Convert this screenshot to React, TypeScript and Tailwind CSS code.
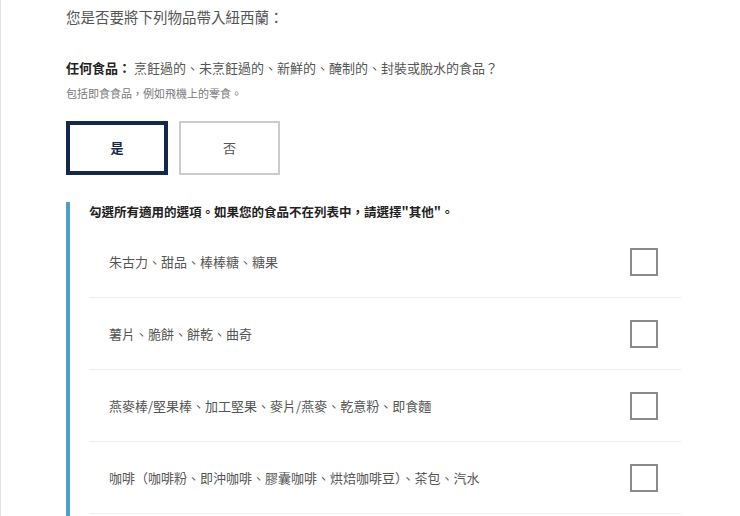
const font = {
  fontFamily:
    '"Noto Sans CJK HK", "Noto Sans CJK TC", "Noto Sans", "Liberation Sans", sans-serif',
};

const items = [
  "朱古力、甜品、棒棒糖、糖果",
  "薯片、脆餅、餅乾、曲奇",
  "燕麥棒/堅果棒、加工堅果、麥片/燕麥、乾意粉、即食麵",
  "咖啡（咖啡粉、即沖咖啡、膠囊咖啡、烘焙咖啡豆）、茶包、汽水",
];

function OptionRow({ label }: { label: string }) {
  return (
    <div className="flex h-[72px] items-center justify-between border-b border-[#eeeeee] pl-5 pr-[23px]">
      <span className="text-[13px] text-[#555555]">{label}</span>
      <span className="block h-[28px] w-[28px] border-2 border-[#8a8a8a] bg-white" />
    </div>
  );
}

export default function App() {
  return (
    <div
      lang="zh-Hant-TW"
      className="h-[516px] w-[740px] overflow-hidden border-l border-[#e2e2e2] bg-white pl-[65px] pt-[7px]"
      style={font}
    >
      <h1 className="text-[14.5px] leading-[20px] text-[#555555]">
        您是否要將下列物品帶入紐西蘭：
      </h1>

      <p className="mt-[31px] text-[13px] leading-[20px] text-[#555555]">
        <span className="font-bold text-[#222222]">任何食品：</span> 烹飪過的、未烹飪過的、新鮮的、醃制的、封裝或脫水的食品？
      </p>
      <p className="mt-[7px] text-[11px] leading-[16px] text-[#7a7a7a]">
        包括即食食品，例如飛機上的零食。
      </p>

      <div className="mt-[20px] flex gap-[11px]">
        <button className="flex h-[54px] w-[102px] items-center justify-center border-4 border-[#14294a] bg-white text-[13px] font-bold text-[#14294a]">
          是
        </button>
        <button className="flex h-[54px] w-[101px] items-center justify-center border-2 border-[#cccccc] bg-white text-[13px] text-[#555555]">
          否
        </button>
      </div>

      <section className="mt-[27px] flex h-[400px] w-[615px] border-l-4 border-[#4aa0c5]">
        <div className="flex-1 pl-[19px]">
          <h2 className="mt-px text-[12.5px] font-bold leading-[18px] text-[#222222]">
            勾選所有適用的選項。如果您的食品不在列表中，請選擇"其他"。
          </h2>
          <div className="mt-[5px]">
            {items.map((it) => (
              <OptionRow key={it} label={it} />
            ))}
          </div>
        </div>
      </section>
    </div>
  );
}
